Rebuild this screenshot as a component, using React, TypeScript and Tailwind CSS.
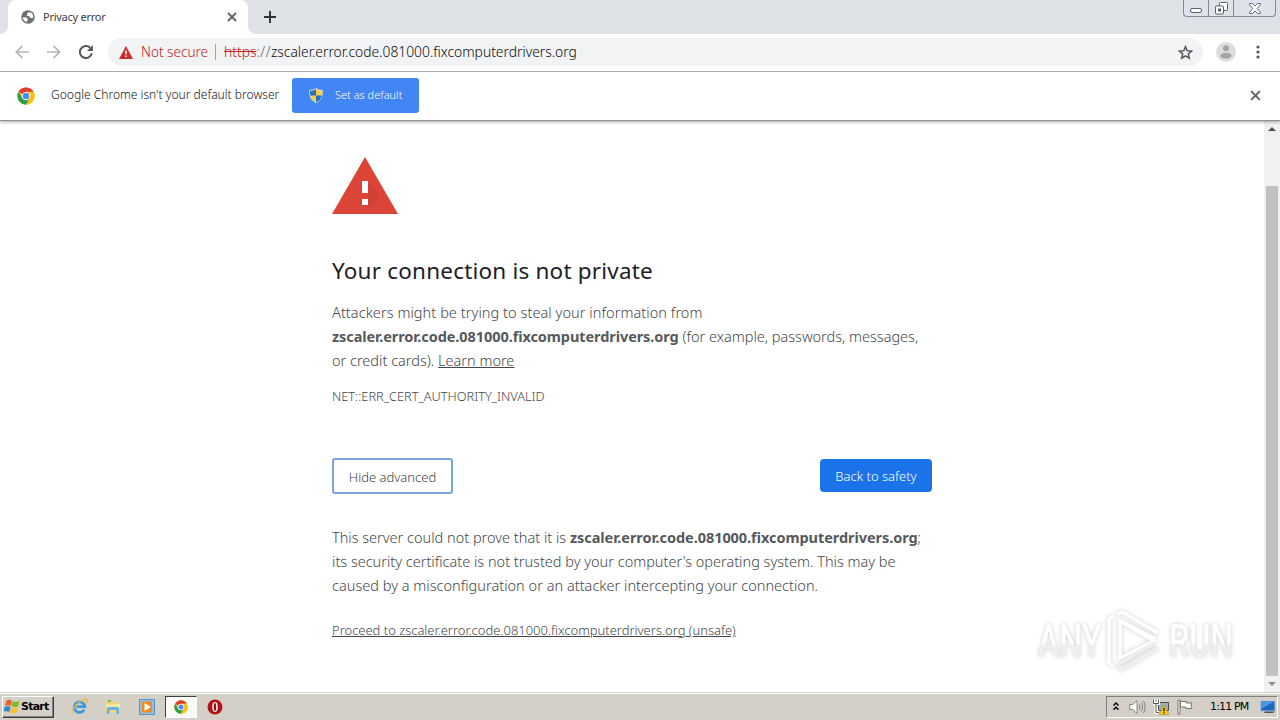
import type { ReactNode } from "react"
import { clsx } from "clsx"

const HOST = "zscaler.error.code.081000.fixcomputerdrivers.org"

function Line({ children, className }: { children: ReactNode; className?: string }) {
  return (
    <div className="whitespace-nowrap">
      <span className={className}>{children}</span>
    </div>
  )
}

function ChromeLogo({ className }: { className?: string }) {
  return (
    <svg viewBox="0 0 48 48" className={className}>
      <circle cx="24" cy="24" r="23" fill="#fbc116" />
      <path d="M24 24 4.1 12.5A23 23 0 0 1 43.9 12.5H24Z" fill="#e33b2e" />
      <path d="M4.1 12.5A23 23 0 0 0 24 47L34 29.7 24 24 14 29.7Z" fill="#2c9f4b" />
      <path d="M24 13H44.2A23 23 0 0 1 24 47L34 29.7Z" fill="#fbc116" />
      <circle cx="24" cy="24" r="11" fill="#fff" />
      <circle cx="24" cy="24" r="8.6" fill="#4a8af4" />
    </svg>
  )
}

function CloseIcon({ className }: { className?: string }) {
  return (
    <svg viewBox="0 0 10 10" className={className}>
      <path d="M1 1l8 8M9 1l-8 8" stroke="#5f6368" strokeWidth="1.8" />
    </svg>
  )
}

function WindowControls() {
  return (
    <div className="ml-auto mr-1 flex h-[17px] w-[93px] rounded-b border border-t-0 border-[#85888f] bg-[#dfe2e8]">
      <div className="flex w-[25px] justify-center border-r border-[#85888f] pt-2">
        <div className="h-[5px] w-3 rounded-[2px] border border-[#5c5f68] bg-white" />
      </div>
      <div className="flex w-[25px] justify-center border-r border-[#85888f] pt-[2px]">
        <svg width="13" height="13" viewBox="0 0 13 13" fill="#fff" stroke="#5c5f68">
          <rect x="4.5" y=".5" width="8" height="8" rx="1" />
          <rect x=".5" y="4" width="8" height="8" rx="1" />
          <rect x="3.5" y="7" width="2" height="2" />
        </svg>
      </div>
      <div className="flex flex-1 justify-center pt-[3px]">
        <svg width="12" height="11" viewBox="0 0 12 11">
          <path d="M.6.5h3L6 3.2 8.4.5h3v1.2L8.2 5.5l3.2 3.8v1.2h-3L6 7.8l-2.4 2.7h-3V9.3l3.2-3.8L.6 1.7Z" fill="#fff" stroke="#5c5f68" strokeWidth=".9" />
        </svg>
      </div>
    </div>
  )
}

function TabStrip() {
  return (
    <div className="flex h-[34px] bg-[#dee1e6]">
      <div className="flex w-2 items-end bg-white">
        <div className="h-full w-2 rounded-br-lg bg-[#dee1e6]" />
      </div>
      <div className="flex w-60 items-center rounded-t-lg bg-white pl-[13px] pr-[11px]">
        <svg width="14" height="14" viewBox="0 0 16 16" className="mr-2">
          <circle cx="8" cy="8" r="7.7" fill="#6b6e73" />
          <path d="M2 8.2 6.2 8.6l2 2.2L7 12.2v1.6A6 6 0 0 1 2 8.2ZM9.3 2.3 7 4.2l-.4 2.3 2.6.4 1.2 2 2.7.4.9-1A6 6 0 0 0 9.3 2.3Z" fill="#fff" />
        </svg>
        <span className="text-[11px] font-normal tracking-[-0.25px] text-[#3c4043]">Privacy error</span>
        <CloseIcon className="ml-auto size-[10px]" />
      </div>
      <div className="w-2 bg-white">
        <div className="h-full w-2 rounded-bl-lg bg-[#dee1e6]" />
      </div>
      <svg width="12" height="12" viewBox="0 0 12 12" className="ml-2 mt-[11px]">
        <path d="M6 0v12M0 6h12" stroke="#2f3338" strokeWidth="1.9" />
      </svg>
      <WindowControls />
    </div>
  )
}

function Toolbar() {
  return (
    <div className="flex h-[38px] items-center border-b border-[#b5b6b8] bg-white pb-px pl-[15px]">
      <svg width="14" height="14" viewBox="0 0 14 14" fill="none" stroke="#b4b6b9" strokeWidth="1.7">
        <path d="M14 7H1.5M7.5.8 1.3 7l6.2 6.2" />
      </svg>
      <svg width="14" height="14" viewBox="0 0 14 14" fill="none" stroke="#b4b6b9" strokeWidth="1.7" className="ml-[18px]">
        <path d="M0 7h12.5M6.5.8 12.7 7l-6.2 6.2" />
      </svg>
      <svg width="14" height="14" viewBox="0 0 14 14" className="ml-[18px]">
        <path d="M12.8 8.3A6 6 0 1 1 11.2 2.8" fill="none" stroke="#54575b" strokeWidth="2" />
        <path d="M13.9 0v6H8Z" fill="#54575b" />
      </svg>
      <div className="ml-[15px] flex h-7 w-[1095px] items-center rounded-full bg-[#f1f3f4] pl-[11px] pr-[10px]">
        <svg width="14" height="13" viewBox="0 0 14 13">
          <path d="M7 0l7 13H0Z" fill="#c9302c" />
          <path d="M6.3 4.5h1.5v3.8H6.3ZM6.3 9.5h1.5V11H6.3Z" fill="#fff" />
        </svg>
        <span className="ml-2 w-[67px] whitespace-nowrap text-[13.6px] text-[#c5221f]">Not secure</span>
        <div className="ml-[7px] h-4 w-px bg-[#a2a5a9]" />
        <span className="ml-2 whitespace-nowrap text-[13.85px] text-[#0c0d0e]">
          <span className="text-[#c5221f] line-through">https</span>
          <span className="tracking-[0.5px] text-[#60666c]">://</span>
          {HOST}
        </span>
        <svg width="15" height="15" viewBox="0 0 24 24" className="ml-auto">
          <path d="m12 2.5 2.7 6.6 7.1.6-5.4 4.6 1.7 6.9L12 17.5l-6.1 3.7 1.7-6.9-5.4-4.6 7.1-.6Z" fill="none" stroke="#54575b" strokeWidth="2.4" />
        </svg>
      </div>
      <svg width="20" height="20" viewBox="0 0 20 20" className="ml-[13px]">
        <circle cx="10" cy="10" r="10" fill="#dcdddf" />
        <circle cx="10" cy="6.2" r="3" fill="#a3a4a6" />
        <ellipse cx="10" cy="13.7" rx="5.5" ry="3" fill="#a3a4a6" />
      </svg>
      <svg width="4" height="14" viewBox="0 0 4 14" fill="#54575b" className="ml-5">
        <circle cx="2" cy="2" r="1.6" />
        <circle cx="2" cy="7" r="1.6" />
        <circle cx="2" cy="12" r="1.6" />
      </svg>
    </div>
  )
}

function InfoBar() {
  return (
    <div className="relative z-10 flex h-[49px] items-center border-b border-[#8f8f8f] bg-white pb-px pl-[17px] pr-[19px] shadow-[0_1px_3px_rgba(0,0,0,0.35)]">
      <ChromeLogo className="size-[18px]" />
      <span className="ml-4 w-[241px] whitespace-nowrap text-[12.05px] text-[#151618]">
        Google Chrome isn't your default browser
      </span>
      <button className="flex h-[35px] w-[127px] items-center rounded-[3px] bg-[#4285f4] pl-[17px] text-[11px] text-white">
        <svg width="14" height="15" viewBox="0 0 14 15" className="mr-3">
          <path d="M7 .5C5 2 3 2.3.6 2.3.4 8 2 12.5 7 14.5c5-2 6.6-6.5 6.4-12.2C11 2.3 9 2 7 .5Z" fill="#f4d03c" stroke="#d5dce3" />
          <path d="M7 1.2V7.5H1.2C.9 5.7 1 4.2 1 2.8 3.5 2.7 5 2.3 7 1.2ZM7 7.5h5.8c-.6 3-2.4 5.3-5.8 6.5Z" fill="#2c6fc4" />
        </svg>
        <span>Set as default</span>
      </button>
      <CloseIcon className="ml-auto size-[11px]" />
    </div>
  )
}

function Scrollbar() {
  return (
    <div className="flex w-4 flex-col items-center bg-[#f1f1f1]">
      <svg width="8" height="4" viewBox="0 0 8 4" className="mt-[6px]">
        <path d="M0 4 4 0l4 4Z" fill="#4d4d4d" />
      </svg>
      <div className="mt-[55px] h-[490px] w-3 bg-[#c1c1c1]" />
      <svg width="8" height="4" viewBox="0 0 8 4" className="mt-[6px]">
        <path d="M0 0l4 4 4-4Z" fill="#8c8c8c" />
      </svg>
    </div>
  )
}

function Watermark() {
  return (
    <div className="absolute bottom-[20px] right-[47px] flex items-center font-['Roboto',sans-serif] text-[46px] font-medium leading-none text-transparent [filter:drop-shadow(0_0_2px_rgba(0,0,0,0.2))]">
      <span className="w-[66px]">
        <span className="inline-block origin-left scale-x-[0.7] bg-linear-to-b from-white from-55% to-[#efefef] to-60% bg-clip-text">ANY</span>
      </span>
      <svg width="58" height="62" viewBox="0 0 58 62" fill="none" stroke="#fff" strokeWidth="3.5">
        <path d="M16 11v37l34-17ZM16 11 52 29M10 6 5 9v44l5 3M13 4l5-2 36 21" />
        <path d="M54 38 18 59l-5-3M50 33 16 53" stroke="#efefef" />
      </svg>
      <span className="ml-[7px] w-[64px]">
        <span className="inline-block origin-left scale-x-[0.7] bg-linear-to-b from-white from-55% to-[#efefef] to-60% bg-clip-text">RUN</span>
      </span>
    </div>
  )
}

function WarningPage() {
  return (
    <div className="relative flex flex-1 bg-white">
      <main className="flex-1 pl-[332px] text-[14.5px] leading-6 text-[#43474b]">
        <svg width="66" height="57" viewBox="0 0 66 57" className="mt-9">
          <path d="M33 0l33 57H0Z" fill="#db4437" />
          <path d="M36 24 48 38 40 50H34l-4-2 6-6Z" fill="#c93c31" opacity=".5" />
          <path d="M30 24h6v12h-6ZM30 42h6v6h-6Z" fill="#fff" />
        </svg>
        <h1 className="mt-[42px] whitespace-nowrap text-[22.5px] font-normal leading-[30px] tracking-[0.2px] text-[#202124]">
          Your connection is not private
        </h1>
        <div className="mt-[14px]">
          <Line className="tracking-[0.06px]">Attackers might be trying to steal your information from</Line>
          <Line>
            <b className="font-bold tracking-[-0.08px] text-[#55595d]">{HOST}</b> (for example, passwords, messages,
          </Line>
          <Line>
            or credit cards). <a className="underline">Learn more</a>
          </Line>
        </div>
        <div className="mt-3 text-[12.75px]">
          <Line>NET::ERR_CERT_AUTHORITY_INVALID</Line>
        </div>
        <div className="mt-[50px] flex h-9 w-[600px] items-start justify-between text-[13px]">
          <button className="h-9 w-[121px] rounded-[3px] border-2 border-[#7ba5dd] bg-white pt-px">Hide advanced</button>
          <button className="mt-px h-[33px] w-28 rounded bg-[#1a73e8] text-white">Back to safety</button>
        </div>
        <div className="mt-[31px]">
          <Line>
            This server could not prove that it is <b className="font-bold tracking-[-0.06px] text-[#55595d]">{HOST}</b>;
          </Line>
          <Line>its security certificate is not trusted by your computer's operating system. This may be</Line>
          <Line className="tracking-[0.02px]">caused by a misconfiguration or an attacker intercepting your connection.</Line>
        </div>
        <div className="mt-[21px] text-[13px]">
          <Line className="tracking-[-0.02px] underline">Proceed to {HOST} (unsafe)</Line>
        </div>
      </main>
      <Scrollbar />
      <Watermark />
    </div>
  )
}

function TaskItem({ active, children }: { active?: boolean; children: ReactNode }) {
  return (
    <div
      className={clsx(
        "flex h-[22px] w-8 items-center justify-center",
        active && "border border-[#fff] border-l-[#404040] border-t-[#404040] bg-[#fbfaf8]",
      )}
    >
      {children}
    </div>
  )
}

function Taskbar() {
  return (
    <footer className="flex h-7 items-center border-t border-[#d4d0c8] bg-[#d4d0c8] pl-[2px] font-normal shadow-[inset_0_1px_0_#fff]">
      <button className="flex h-[22px] w-[52px] items-center border border-b-[#404040] border-l-white border-r-[#404040] border-t-white pl-px font-['DejaVu_Sans',sans-serif] text-[11px] font-bold tracking-[-0.75px] text-black shadow-[inset_-1px_-1px_0_#808080]">
        <svg width="16" height="15" viewBox="0 0 16 15" className="mr-px">
          <path d="M2.5 1.5C5 .2 6.5.8 8 1.8L6.7 7C5 6 3.5 6 1 7Z" fill="#e8602c" />
          <path d="M8.8 2.2c2.2 1.2 4 1 6.7-.2L14 7.2c-2.5 1.2-4.5 1-6.5.1Z" fill="#7db928" />
          <path d="M.8 7.9c2.5-1 4-.9 5.7 0L5.2 13C3.5 12-.5 12-.6 13Z" fill="#2f83d5" />
          <path d="M7.3 8.3c2 1 4 1 6.5-.1l-1.5 5.2c-2.5 1.2-4.5 1-6.4 0Z" fill="#f8c22b" />
        </svg>
        <span className="mt-px">Start</span>
      </button>
      <div className="ml-[9px] flex gap-[2px]">
        <TaskItem>
          <svg width="17" height="17" viewBox="0 0 17 17" fill="none">
            <path d="M13.2 11.7A5.3 5.3 0 1 1 13.8 8.7H5.5" stroke="#3a9be0" strokeWidth="2.8" />
            <path d="M1.5 15.5C-1 13 7 3 13 1.3c4-1 3.5 2 2 4" stroke="#e9b83a" strokeWidth="1.3" />
          </svg>
        </TaskItem>
        <TaskItem>
          <svg width="16" height="16" viewBox="0 0 16 16">
            <path d="M1 2h5l1 1.5h7V13H1Z" fill="#f1d277" />
            <path d="M3 1h3v2H3Z" fill="#6dbb52" />
            <path d="M1 5h14v4H1Z" fill="#f8e6a5" />
            <path d="M2 15V9.5q0-1.5 1.5-1.5h9Q14 8 14 9.5V15h-2.5v-4h-7v4Z" fill="#66b4df" />
          </svg>
        </TaskItem>
        <TaskItem>
          <svg width="16" height="16" viewBox="0 0 16 16">
            <rect x=".5" y=".5" width="15" height="15" fill="#8dc0ea" stroke="#5b93c7" />
            <rect x="3" y="2.5" width="10" height="11" fill="#f18a1c" />
            <path d="M5.5 4v8L12 8Z" fill="#fff" />
          </svg>
        </TaskItem>
        <TaskItem active>
          <ChromeLogo className="size-[14px]" />
        </TaskItem>
        <TaskItem>
          <svg width="16" height="16" viewBox="0 0 16 16">
            <circle cx="8" cy="8" r="7.5" fill="#b01218" />
            <ellipse cx="8" cy="8" rx="2.8" ry="5" fill="#f5e6e4" />
            <ellipse cx="8" cy="8" rx="1.1" ry="4" fill="#941015" />
          </svg>
        </TaskItem>
      </div>
      <div className="ml-auto mr-[2px] flex h-[22px] w-[172px] items-center border border-b-white border-l-[#808080] border-r-white border-t-[#808080] pl-[6px]">
        <svg width="6" height="9" viewBox="0 0 6 9" fill="none" stroke="#000" strokeWidth="1.4">
          <path d="M.5 3.5 3 1l2.5 2.5M.5 7.8 3 5.3l2.5 2.5" />
        </svg>
        <svg width="17" height="16" viewBox="0 0 17 16" fill="#fff" stroke="#85827d" className="ml-[10px]">
          <path d="M.8 5.5h3L8 1.5v13l-4.2-4h-3Z" />
          <path d="M10.2 5.5q1.5 2.5 0 5M12.4 3.7q2.6 4.3 0 8.6M14.5 2q3.4 6 0 12" fill="none" />
        </svg>
        <svg width="16" height="16" viewBox="0 0 16 16" className="ml-[7px]">
          <path d="M5.5 3.5h10v8h-10Z" fill="#9eabb2" stroke="#4f5355" />
          <path d="M.5.5h5v4h-5ZM3 4.5v9h3" fill="#fff" stroke="#fff" strokeWidth="3" />
          <path d="M.5.5v4h5v-4M3 .5v2M3 4.5v9h3" fill="none" stroke="#58595a" />
          <path d="M11 6.5 16 15.5H6Z" fill="#f7cf16" stroke="#b78f0a" strokeWidth=".6" />
          <path d="M11 9v3.5M11 13.3v1.2" stroke="#000" strokeWidth="1.2" />
        </svg>
        <svg width="16" height="16" viewBox="0 0 16 16" fill="#fff" stroke="#77746f" className="ml-2">
          <path d="M3.5 2.5h6v1.5h5.5q-2 3 0 5.5H9V8H3.5Z" />
          <path d="M1 1h2v14H1Z" />
        </svg>
        <span className="ml-[17px] mt-[2px] whitespace-nowrap font-['DejaVu_Sans',sans-serif] text-[11px] tracking-[-0.85px] text-black">1:11 PM</span>
        <svg width="16" height="14" viewBox="0 0 16 14" className="ml-auto mr-[1px]">
          <path d="M.5 1h14.5v10H.5Z" fill="#1f66bd" stroke="#a9c3df" />
          <path d="M1 1.5h13L1 9Z" fill="#4d97e3" />
          <path d="M5 11.5h10l-2 1.5H4Z" fill="#44535f" />
        </svg>
      </div>
    </footer>
  )
}

export default function App() {
  return (
    <div className="flex h-[720px] w-[1280px] flex-col overflow-hidden bg-white font-['Noto_Sans','Open_Sans',sans-serif] font-light">
      <TabStrip />
      <Toolbar />
      <InfoBar />
      <WarningPage />
      <Taskbar />
    </div>
  )
}
